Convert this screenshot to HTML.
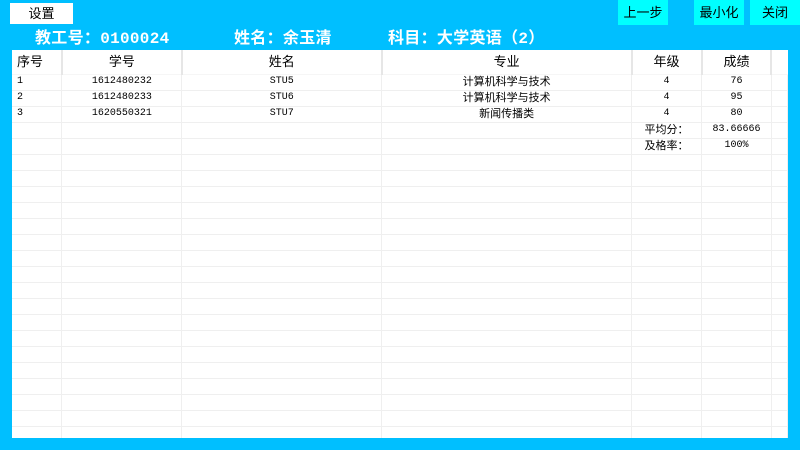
<!DOCTYPE html>
<html><head><meta charset="utf-8"><style>
*{margin:0;padding:0;box-sizing:border-box}
body{width:800px;height:450px;background:#00BFFF;position:relative;overflow:hidden;font-family:"Liberation Sans","Noto Sans CJK SC",sans-serif;}
.btn{position:absolute;font-size:13px;text-align:center;line-height:22px;color:#000}
.t{position:absolute;top:24px;color:#fff;font-weight:bold;font-size:16px;letter-spacing:0.3px;font-family:"Liberation Mono","Noto Sans CJK SC",monospace}
#tb{position:absolute;left:12px;top:50px;width:776px;height:388px;background:#fff;overflow:hidden}
table{border-collapse:collapse;table-layout:fixed;font-size:10px;font-family:"Liberation Mono","Noto Sans CJK SC",monospace}
td{border-right:1px solid #efefef;border-bottom:1px solid #efefef;height:16px;text-align:center;padding:0;line-height:14px;white-space:nowrap;overflow:hidden}
td.z{font-size:11px;font-family:"Liberation Sans","Noto Sans CJK SC",sans-serif}
tr.h td{height:24px;font-size:13px;border-bottom:1px solid #f6f6f6;border-right:2px solid #e6e6e6;font-family:"Liberation Sans","Noto Sans CJK SC",sans-serif}
td.l{text-align:left;padding-left:5px}
</style></head><body>
<div class="btn" style="left:10px;top:3px;width:63px;height:21px;background:#fff;line-height:21px">设置</div>
<div class="btn" style="left:618px;top:0;width:50px;height:25px;background:#00FFFF;line-height:26px">上一步</div>
<div class="btn" style="left:694px;top:0;width:50px;height:25px;background:#00FFFF;line-height:26px">最小化</div>
<div class="btn" style="left:750px;top:0;width:50px;height:25px;background:#00FFFF;line-height:26px">关闭</div>
<div class="t" style="left:35px">教工号：0100024</div>
<div class="t" style="left:234px">姓名：余玉清</div>
<div class="t" style="left:388px">科目：大学英语（2）</div>
<div id="tb"><table>
<colgroup><col style="width:50px"><col style="width:120px"><col style="width:200px"><col style="width:250px"><col style="width:70px"><col style="width:70px"><col style="width:16px"></colgroup>
<tr class="h"><td class="l">序号</td><td>学号</td><td>姓名</td><td>专业</td><td>年级</td><td>成绩</td><td style="border-right:none"></td></tr>
<tr><td class="l">1</td><td>1612480232</td><td>STU5</td><td class="z">计算机科学与技术</td><td>4</td><td>76</td><td></td></tr>
<tr><td class="l">2</td><td>1612480233</td><td>STU6</td><td class="z">计算机科学与技术</td><td>4</td><td>95</td><td></td></tr>
<tr><td class="l">3</td><td>1620550321</td><td>STU7</td><td class="z">新闻传播类</td><td>4</td><td>80</td><td></td></tr>
<tr><td></td><td></td><td></td><td></td><td class="z">平均分：</td><td>83.66666</td><td></td></tr>
<tr><td></td><td></td><td></td><td></td><td class="z">及格率：</td><td>100%</td><td></td></tr>
<tr><td></td><td></td><td></td><td></td><td></td><td></td><td></td></tr>
<tr><td></td><td></td><td></td><td></td><td></td><td></td><td></td></tr>
<tr><td></td><td></td><td></td><td></td><td></td><td></td><td></td></tr>
<tr><td></td><td></td><td></td><td></td><td></td><td></td><td></td></tr>
<tr><td></td><td></td><td></td><td></td><td></td><td></td><td></td></tr>
<tr><td></td><td></td><td></td><td></td><td></td><td></td><td></td></tr>
<tr><td></td><td></td><td></td><td></td><td></td><td></td><td></td></tr>
<tr><td></td><td></td><td></td><td></td><td></td><td></td><td></td></tr>
<tr><td></td><td></td><td></td><td></td><td></td><td></td><td></td></tr>
<tr><td></td><td></td><td></td><td></td><td></td><td></td><td></td></tr>
<tr><td></td><td></td><td></td><td></td><td></td><td></td><td></td></tr>
<tr><td></td><td></td><td></td><td></td><td></td><td></td><td></td></tr>
<tr><td></td><td></td><td></td><td></td><td></td><td></td><td></td></tr>
<tr><td></td><td></td><td></td><td></td><td></td><td></td><td></td></tr>
<tr><td></td><td></td><td></td><td></td><td></td><td></td><td></td></tr>
<tr><td></td><td></td><td></td><td></td><td></td><td></td><td></td></tr>
<tr><td></td><td></td><td></td><td></td><td></td><td></td><td></td></tr>
<tr><td></td><td></td><td></td><td></td><td></td><td></td><td></td></tr>
</table></div>
</body></html>
